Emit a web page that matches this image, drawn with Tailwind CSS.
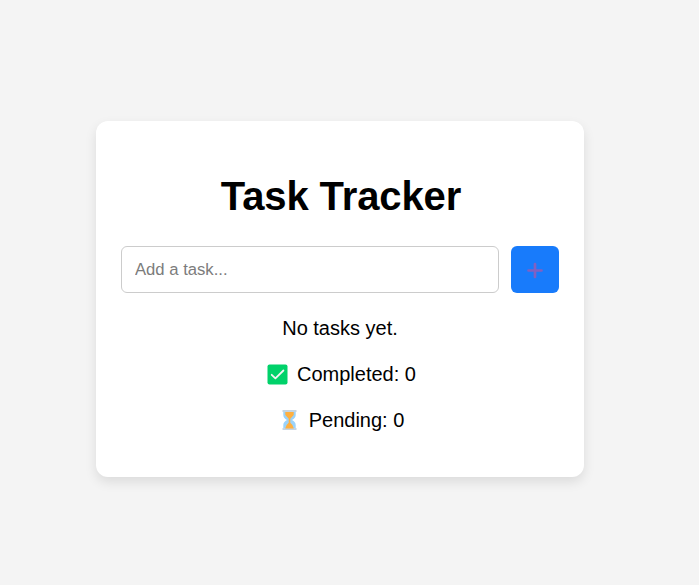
<!DOCTYPE html>
<html lang="en">
<head>
<meta charset="utf-8">
<title>Task Tracker</title>
<script src="https://cdn.jsdelivr.net/npm/@tailwindcss/browser@4"></script>
</head>
<body class="bg-[#f4f4f4] h-[585px] overflow-hidden font-['Liberation_Sans',Arial,sans-serif] text-black">
<main class="ml-24 pt-[121px]">
  <section class="w-[488px] h-[356px] rounded-[12px] bg-white px-[25px] pt-[51px] text-center shadow-[0_5px_12px_rgba(0,0,0,0.1)]">
    <h1 class="text-[40px] leading-[48px] font-bold tracking-[-0.1px] pl-[2px]">Task Tracker</h1>
    <form class="mt-[26px] flex gap-[12px]">
      <input type="text" placeholder="Add a task..." class="h-[47px] w-[378px] rounded-[6px] border border-[#ccc] bg-white px-[13px] text-[16.67px] placeholder:text-[#7c7c7c]">
      <button type="button" aria-label="Add task" class="flex h-[47px] w-[48px] items-center justify-center rounded-[6px] bg-[#187bfb] pt-[2px]">
        <svg class="h-[17px] w-4" viewBox="0 0 16 17" fill="none" stroke="#8160c2" stroke-width="2.7" stroke-linecap="round"><path d="M8 2V15M1.5 8.5H14.5"/></svg>
      </button>
    </form>
    <p class="mt-[23px] text-[20px] leading-[24px]">No tasks yet.</p>
    <p class="mt-[22px] flex items-center justify-center gap-[9px] pl-[3px] text-[20px] leading-[24px]">
      <svg class="size-[21px]" viewBox="0 0 21 21" fill="none"><rect x=".5" y=".5" width="20" height="20" rx="2" fill="#00d26a"/><path d="M4.7 10.8L8.4 14.3L16.4 6.5" stroke="#f4f4f4" stroke-width="1.8" stroke-linecap="round" stroke-linejoin="round"/></svg>
      <span>Completed: 0</span>
    </p>
    <p class="mt-[22px] flex items-center justify-center gap-[11px] pl-[5px] text-[20px] leading-[24px]">
      <svg class="h-[20px] w-[17px]" viewBox="0 0 17 20"><path d="M2.3 2H14.7V5Q14.7 8 11 10Q14.7 12 14.7 15V18H2.3V15Q2.3 12 6 10Q2.3 8 2.3 5Z" fill="#9bd3fb"/><path d="M1.5 0H15.5V2H1.5ZM1.5 18H15.5V20H1.5Z" fill="#c5d5e3"/><path d="M4.3 2H12.7V5L9.3 8.8V12.8Q11.8 14.5 12.8 18.5H4.2Q5.2 14.5 7.7 12.8V8.8L4.3 5Z" fill="#ffb040"/></svg>
      <span>Pending: 0</span>
    </p>
  </section>
</main>
</body>
</html>
